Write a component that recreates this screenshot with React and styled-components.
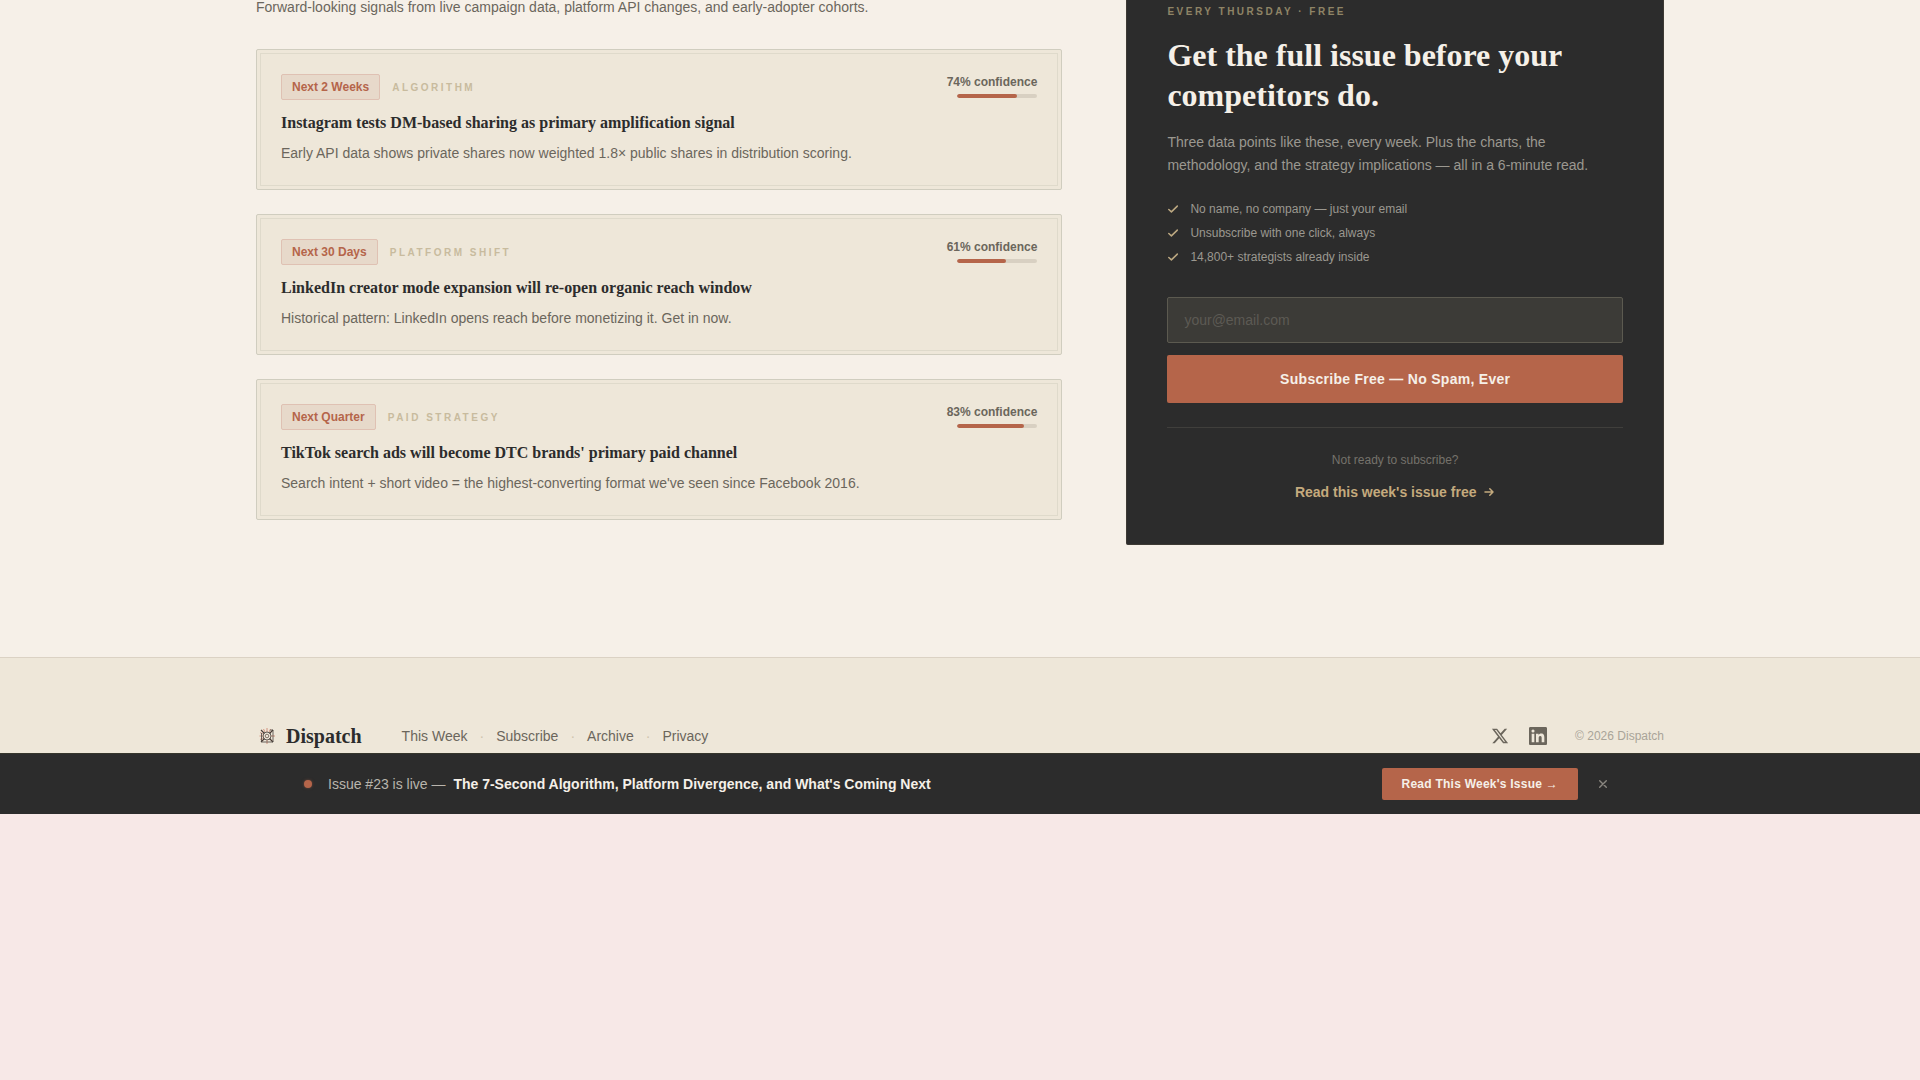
import React from "react";
import styled, { createGlobalStyle } from "styled-components";

const GlobalStyle = createGlobalStyle`
    * {
        box-sizing: border-box;
    }

    body {
        margin: 0;
        background-color: #f7e8e7;
        color: #2c2c2c;
        font-family: "Liberation Sans", Arial, sans-serif;
        font-size: 14px;
    }

    h2, h3, p, ul {
        margin: 0;
        padding: 0;
    }

    button, input {
        font-family: inherit;
    }
`;

const serif = `"Liberation Serif", "Times New Roman", serif`;

const Main = styled.main`
    background-color: #f6f0e8;
    padding: 0 24px 112px;
`;

const Columns = styled.div`
    max-width: 1408px;
    margin: 0 auto;
    display: grid;
    grid-template-columns: 3fr 2fr;
    gap: 64px;
    align-items: start;
`;

const Intro = styled.p`
    line-height: 15px;
    padding-bottom: 34px;
    color: #6b665c;
`;

const CardList = styled.div`
    display: flex;
    flex-direction: column;
    gap: 24px;
`;

const Card = styled.article`
    position: relative;
    display: flex;
    justify-content: space-between;
    align-items: flex-start;
    gap: 24px;
    padding: 24px;
    background-color: #eee7d9;
    border: 1px solid #d0cdbf;
    border-radius: 2px;

    &::after {
        content: "";
        position: absolute;
        inset: 3px;
        border: 1px solid #dfdacb;
        pointer-events: none;
    }
`;

const Tags = styled.div`
    display: flex;
    align-items: center;
    gap: 12px;
    margin-bottom: 12px;
`;

const Badge = styled.span`
    padding: 4px 10px;
    border: 1px solid #dfc1b3;
    border-radius: 2px;
    background-color: #e7d9ca;
    color: #b5654a;
    font-size: 12px;
    font-weight: 700;
    line-height: 16px;
`;

const Category = styled.span`
    color: #c8bb9e;
    font-size: 10px;
    font-weight: 700;
    letter-spacing: 0.25em;
    text-transform: uppercase;
`;

const CardTitle = styled.h3`
    margin-bottom: 8px;
    font-family: ${serif};
    font-size: 16px;
    line-height: 22px;
`;

const CardText = styled.p`
    color: #6b665c;
    line-height: 23px;
`;

const Confidence = styled.div`
    display: flex;
    flex-direction: column;
    align-items: flex-end;
    gap: 4px;
    color: #6b665c;
    font-size: 12px;
    font-weight: 700;
    line-height: 16px;
    white-space: nowrap;
`;

const Meter = styled.div`
    width: 80px;
    height: 4px;
    border-radius: 2px;
    overflow: hidden;
    background-color: #d8d0c2;
`;

const MeterFill = styled.div`
    height: 100%;
    border-radius: 2px;
    background-color: #b5654a;
`;

const Panel = styled.aside`
    padding: 0 40px 40px;
    background-color: #2c2c2c;
    border: 1px solid #3d3a34;
    border-top: none;
    border-radius: 0 0 2px 2px;
`;

const Kicker = styled.p`
    padding-top: 3px;
    margin-bottom: 14px;
    color: #8f8466;
    font-size: 10px;
    font-weight: 700;
    letter-spacing: 0.25em;
    line-height: 18px;
    text-transform: uppercase;
`;

const PanelTitle = styled.h2`
    margin-bottom: 16px;
    color: #f5f0e8;
    font-family: ${serif};
    font-size: 32px;
    line-height: 40px;
`;

const PanelText = styled.p`
    margin-bottom: 24px;
    color: #9b9890;
    line-height: 23px;
`;

const Perks = styled.ul`
    display: flex;
    flex-direction: column;
    gap: 8px;
    margin-bottom: 32px;
    list-style: none;
`;

const Perk = styled.li`
    display: flex;
    align-items: center;
    gap: 11px;
    color: #9b9890;
    font-size: 12px;
    line-height: 16px;

    svg {
        color: #bda982;
    }
`;

const SubscribeForm = styled.form`
    display: flex;
    flex-direction: column;
    gap: 12px;
    padding-bottom: 24px;
    border-bottom: 1px solid #403f3c;
`;

const EmailInput = styled.input`
    height: 46px;
    padding: 0 16px;
    border: 1px solid #5c5a50;
    border-radius: 2px;
    background-color: #3c3b37;
    color: #f5f0e8;
    font-size: 14px;

    &::placeholder {
        color: #5c5a54;
    }
`;

const Button = styled.button`
    height: ${(props) => (props.$small ? "32px" : "48px")};
    padding: 0 20px;
    border: none;
    border-radius: 2px;
    background-color: #b5654a;
    color: #f5f0e8;
    cursor: pointer;
    font-size: ${(props) => (props.$small ? "12px" : "14px")};
    font-weight: 700;
    letter-spacing: 0.02em;
`;

const PanelFooter = styled.div`
    display: flex;
    flex-direction: column;
    align-items: center;
    gap: 12px;
    padding-top: 24px;
`;

const Hint = styled.p`
    color: #75726b;
    font-size: 12px;
    line-height: 16px;
`;

const IssueLink = styled.a`
    display: flex;
    align-items: center;
    gap: 7px;
    color: #c4aa7d;
    font-weight: 700;
    line-height: 24px;
    text-decoration: none;
`;

const Footer = styled.footer`
    padding: 64px 24px 3px;
    border-top: 1px solid #dbd2c4;
    background-color: #eee7d9;
`;

const FooterRow = styled.div`
    max-width: 1408px;
    height: 28px;
    margin: 0 auto;
    display: flex;
    align-items: center;
    justify-content: space-between;
`;

const FooterGroup = styled.div`
    display: flex;
    align-items: center;
    gap: ${(props) => props.$gap};
`;

const Brand = styled.a`
    display: flex;
    align-items: center;
    gap: 8px;
    color: #2c2c2c;
    font-family: ${serif};
    font-size: 20px;
    font-weight: 700;
    text-decoration: none;
`;

const FooterNav = styled.nav`
    display: flex;
    align-items: center;
    gap: 12px;
    color: #cfc4ae;
`;

const FooterLink = styled.a`
    display: flex;
    color: #6b665c;
    text-decoration: none;
`;

const Copyright = styled.p`
    color: #a9a498;
    font-size: 12px;
`;

const Banner = styled.div`
    padding: 14px 24px;
    border-top: 1px solid #36362c;
    background-color: #2c2c2c;
`;

const BannerRow = styled.div`
    max-width: 1312px;
    margin: 0 auto;
    display: flex;
    align-items: center;
    justify-content: space-between;
`;

const BannerGroup = styled.div`
    display: flex;
    align-items: center;
    gap: ${(props) => props.$gap};
`;

const LiveDot = styled.span`
    width: 8px;
    height: 8px;
    border-radius: 50%;
    background-color: #b5654a;
    box-shadow: 0 0 3px rgba(181, 101, 74, 0.5);
`;

const BannerText = styled.p`
    color: #b9b5ad;

    strong {
        margin-left: 4px;
        color: #f5f0e8;
    }
`;

const CloseButton = styled.button`
    display: flex;
    padding: 8px;
    border: none;
    background: none;
    color: #8a8780;
    cursor: pointer;
`;

const CheckIcon = () => (
    <svg width="12" height="12" viewBox="0 0 12 12" fill="none" stroke="currentColor" strokeWidth="1.5" strokeLinecap="round" strokeLinejoin="round" aria-hidden="true">
        <path d="M1.8 6.5l2.6 2.4 5.9-5.8" />
    </svg>
);

const ArrowIcon = () => (
    <svg width="12" height="12" viewBox="0 0 12 12" fill="none" stroke="currentColor" strokeWidth="1.5" strokeLinecap="round" strokeLinejoin="round" aria-hidden="true">
        <path d="M2 6h8M6.8 2.7l3.2 3.3-3.2 3.3" />
    </svg>
);

const CloseIcon = () => (
    <svg width="10" height="10" viewBox="0 0 10 10" fill="none" stroke="currentColor" strokeWidth="1.4" strokeLinecap="round" aria-hidden="true">
        <path d="M1.7 1.7l6.6 6.6M8.3 1.7l-6.6 6.6" />
    </svg>
);

const BrandIcon = () => (
    <svg width="22" height="22" viewBox="0 0 22 22" fill="none" aria-hidden="true">
        <path d="M11 3v4M11 15v4M3.5 11h4M15 11h4M7.5 4l1.5 3M14.5 4L13 7M4 7.5l3 1.5M4 14.5l3-1.5" stroke="#c4705a" strokeOpacity="0.7" />
        <path d="M5 5l3.5 3.5M17 5l-3.5 3.5M5 17l3.5-3.5M17 17l-3.5-3.5" stroke="#4a3a34" strokeWidth="1.2" />
        <path d="M5.5 8v9h11.5V5h-3" stroke="#4a4540" strokeOpacity="0.8" />
        <circle cx="11" cy="11" r="4" stroke="#4a4540" strokeOpacity="0.85" />
        <circle cx="11" cy="11" r="1.8" stroke="#6b5a50" strokeOpacity="0.8" />
    </svg>
);

const XIcon = () => (
    <svg width="18" height="18" viewBox="0 0 24 24" fill="currentColor" aria-hidden="true">
        <path d="M18.244 2.25h3.308l-7.227 8.26 8.502 11.24H16.17l-5.214-6.817L4.99 21.75H1.68l7.73-8.835L1.254 2.25H8.08l4.713 6.231zm-1.161 17.52h1.833L7.084 4.126H5.117z" />
    </svg>
);

const LinkedInIcon = () => (
    <svg width="18" height="18" viewBox="0 0 24 24" fill="currentColor" aria-hidden="true">
        <path d="M20.447 20.452h-3.554v-5.569c0-1.328-.027-3.037-1.852-3.037-1.853 0-2.136 1.445-2.136 2.939v5.667H9.351V9h3.414v1.561h.046c.477-.9 1.637-1.85 3.37-1.85 3.601 0 4.267 2.37 4.267 5.455v6.286zM5.337 7.433a2.062 2.062 0 0 1-2.063-2.065 2.064 2.064 0 1 1 2.063 2.065zm1.782 13.019H3.555V9h3.564v11.452zM22.225 0H1.771C.792 0 0 .774 0 1.729v20.542C0 23.227.792 24 1.771 24h20.451C23.2 24 24 23.227 24 22.271V1.729C24 .774 23.2 0 22.222 0h.003z" />
    </svg>
);

const predictions = [
    {
        when: "Next 2 Weeks",
        category: "Algorithm",
        title: "Instagram tests DM-based sharing as primary amplification signal",
        text: "Early API data shows private shares now weighted 1.8× public shares in distribution scoring.",
        confidence: 74,
    },
    {
        when: "Next 30 Days",
        category: "Platform Shift",
        title: "LinkedIn creator mode expansion will re-open organic reach window",
        text: "Historical pattern: LinkedIn opens reach before monetizing it. Get in now.",
        confidence: 61,
    },
    {
        when: "Next Quarter",
        category: "Paid Strategy",
        title: "TikTok search ads will become DTC brands' primary paid channel",
        text: "Search intent + short video = the highest-converting format we've seen since Facebook 2016.",
        confidence: 83,
    },
];

const perks = [
    "No name, no company — just your email",
    "Unsubscribe with one click, always",
    "14,800+ strategists already inside",
];

const links = ["This Week", "Subscribe", "Archive", "Privacy"];

const Prediction = ({ when, category, title, text, confidence }) => (
    <Card>
        <div>
            <Tags>
                <Badge>{when}</Badge>
                <Category>{category}</Category>
            </Tags>
            <CardTitle>{title}</CardTitle>
            <CardText>{text}</CardText>
        </div>
        <Confidence>
            {confidence}% confidence
            <Meter>
                <MeterFill style={{ width: `${confidence}%` }} />
            </Meter>
        </Confidence>
    </Card>
);

const App = () => {
    return (
        <>
            <GlobalStyle />
            <Main>
                <Columns>
                    <section>
                        <Intro>
                            Forward-looking signals from live campaign data, platform API changes, and early-adopter cohorts.
                        </Intro>
                        <CardList>
                            {predictions.map((item) => (
                                <Prediction key={item.title} {...item} />
                            ))}
                        </CardList>
                    </section>

                    <Panel>
                        <Kicker>Every Thursday · Free</Kicker>
                        <PanelTitle>Get the full issue before your competitors do.</PanelTitle>
                        <PanelText>
                            Three data points like these, every week. Plus the charts, the methodology, and the strategy implications — all in a 6-minute read.
                        </PanelText>
                        <Perks>
                            {perks.map((perk) => (
                                <Perk key={perk}>
                                    <CheckIcon />
                                    {perk}
                                </Perk>
                            ))}
                        </Perks>
                        <SubscribeForm onSubmit={(e) => e.preventDefault()}>
                            <EmailInput type="email" placeholder="your@email.com" aria-label="Email address" />
                            <Button type="submit">Subscribe Free — No Spam, Ever</Button>
                        </SubscribeForm>
                        <PanelFooter>
                            <Hint>Not ready to subscribe?</Hint>
                            <IssueLink href="#issue">
                                Read this week's issue free
                                <ArrowIcon />
                            </IssueLink>
                        </PanelFooter>
                    </Panel>
                </Columns>
            </Main>

            <Footer>
                <FooterRow>
                    <FooterGroup $gap="40px">
                        <Brand href="#top">
                            <BrandIcon />
                            Dispatch
                        </Brand>
                        <FooterNav>
                            {links.map((link, i) => (
                                <React.Fragment key={link}>
                                    {i > 0 && <span>·</span>}
                                    <FooterLink href="#top">{link}</FooterLink>
                                </React.Fragment>
                            ))}
                        </FooterNav>
                    </FooterGroup>
                    <FooterGroup $gap="28px">
                        <FooterGroup $gap="20px">
                            <FooterLink href="#x" aria-label="X">
                                <XIcon />
                            </FooterLink>
                            <FooterLink href="#linkedin" aria-label="LinkedIn">
                                <LinkedInIcon />
                            </FooterLink>
                        </FooterGroup>
                        <Copyright>© 2026 Dispatch</Copyright>
                    </FooterGroup>
                </FooterRow>
            </Footer>

            <Banner>
                <BannerRow>
                    <BannerGroup $gap="16px">
                        <LiveDot />
                        <BannerText>
                            Issue #23 is live — <strong>The 7-Second Algorithm, Platform Divergence, and What's Coming Next</strong>
                        </BannerText>
                    </BannerGroup>
                    <BannerGroup $gap="12px">
                        <Button type="button" $small>Read This Week's Issue →</Button>
                        <CloseButton type="button" aria-label="Dismiss">
                            <CloseIcon />
                        </CloseButton>
                    </BannerGroup>
                </BannerRow>
            </Banner>
        </>
    );
};

export default App;
